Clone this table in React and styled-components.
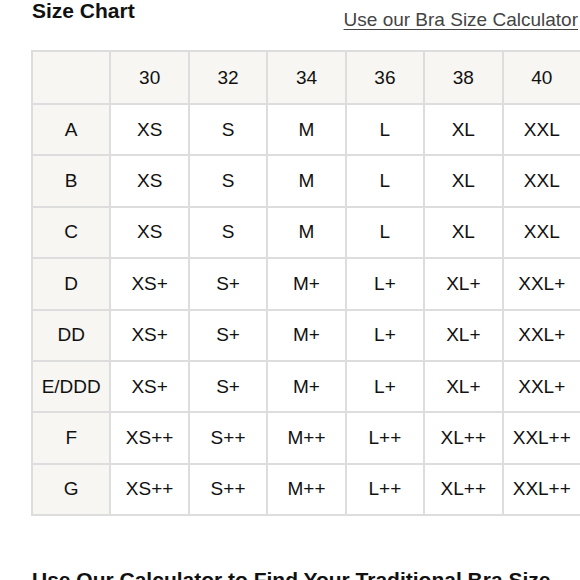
import React from "react";
import styled, { createGlobalStyle } from "styled-components";

const Global = createGlobalStyle`
  html, body { margin: 0; padding: 0; overflow: hidden; background: #fff; }
  body { font-family: "Liberation Sans", Arial, sans-serif; color: #111; }
`;

const Page = styled.div`
  padding: 0 2px 40px 31px;
  width: 580px;
  box-sizing: border-box;
`;

const Header = styled.div`
  display: flex;
  justify-content: space-between;
  align-items: flex-start;
  height: 50px;
`;

const Title = styled.h2`
  margin: -1px 0 0 1px;
  font-size: 21px;
  font-weight: 700;
  line-height: 24px;
  color: #111;
`;

const CalcLink = styled.a`
  margin-top: 9px;
  font-size: 19px;
  line-height: 22px;
  color: #444;
  text-decoration: underline;
  text-underline-offset: 3px;
  text-decoration-thickness: 1px;
  white-space: nowrap;
`;

const Table = styled.table`
  border-collapse: collapse;
  table-layout: fixed;
  width: 551px;
  border: 2px solid #dedddd;
`;

const Cell = styled.td`
  height: ${(p) => (p.$head ? 51 : 49.4)}px;
  padding: 0;
  border: 2px solid #dedddd;
  text-align: center;
  vertical-align: middle;
  font-size: 19px;
  font-weight: 400;
  color: #111;
  background: ${(p) => (p.$shade ? "#f7f6f2" : "#fff")};
`;

const Section = styled.h2`
  margin: 52px 0 0 1px;
  font-size: 21px;
  font-weight: 700;
  line-height: 24px;
  color: #111;
`;

const sizes = ["30", "32", "34", "36", "38", "40"];
const rows = [
  ["A", ["XS", "S", "M", "L", "XL", "XXL"]],
  ["B", ["XS", "S", "M", "L", "XL", "XXL"]],
  ["C", ["XS", "S", "M", "L", "XL", "XXL"]],
  ["D", ["XS+", "S+", "M+", "L+", "XL+", "XXL+"]],
  ["DD", ["XS+", "S+", "M+", "L+", "XL+", "XXL+"]],
  ["E/DDD", ["XS+", "S+", "M+", "L+", "XL+", "XXL+"]],
  ["F", ["XS++", "S++", "M++", "L++", "XL++", "XXL++"]],
  ["G", ["XS++", "S++", "M++", "L++", "XL++", "XXL++"]],
];

export default function App() {
  return (
    <>
      <Global />
      <Page>
        <Header>
          <Title>Size Chart</Title>
          <CalcLink href="#">Use our Bra Size Calculator</CalcLink>
        </Header>
        <Table>
          <tbody>
            <tr>
              <Cell as="th" $head $shade />
              {sizes.map((s) => (
                <Cell as="th" key={s} $head $shade>
                  {s}
                </Cell>
              ))}
            </tr>
            {rows.map(([cup, vals]) => (
              <tr key={cup}>
                <Cell $shade>{cup}</Cell>
                {vals.map((v, i) => (
                  <Cell key={i}>{v}</Cell>
                ))}
              </tr>
            ))}
          </tbody>
        </Table>
        <Section>Use Our Calculator to Find Your Traditional Bra Size</Section>
      </Page>
    </>
  );
}
